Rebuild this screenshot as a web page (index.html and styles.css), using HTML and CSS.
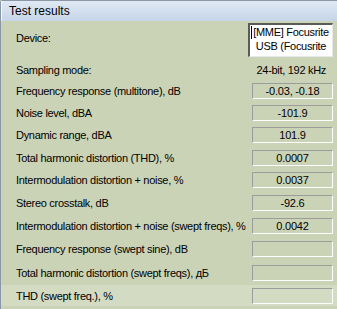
FILE: index.html
```html
<!DOCTYPE html>
<html lang="en">
<head>
    <meta charset="UTF-8">
    <title>Test results</title>
    <link rel="stylesheet" href="styles.css">
</head>
<body>
    <div class="panel">
        <div class="panel-title">Test results</div>
        <div class="panel-body">
            <div class="row row-device">
                <span class="label">Device:</span>
                <div class="device-box"><span class="caret"></span>[MME] Focusrite<br>USB (Focusrite</div>
            </div>
            <div class="row row-plain">
                <span class="label">Sampling mode:</span>
                <span class="plain-value">24-bit, 192 kHz</span>
            </div>
            <div class="results">
                <div class="row"><span class="label">Frequency response (multitone), dB</span><span class="value">-0.03, -0.18</span></div>
                <div class="row"><span class="label">Noise level, dBA</span><span class="value">-101.9</span></div>
                <div class="row"><span class="label">Dynamic range, dBA</span><span class="value">101.9</span></div>
                <div class="row"><span class="label">Total harmonic distortion (THD), %</span><span class="value">0.0007</span></div>
                <div class="row"><span class="label">Intermodulation distortion + noise, %</span><span class="value">0.0037</span></div>
                <div class="row"><span class="label">Stereo crosstalk, dB</span><span class="value">-92.6</span></div>
                <div class="row"><span class="label">Intermodulation distortion + noise (swept freqs), %</span><span class="value">0.0042</span></div>
                <div class="row"><span class="label">Frequency response (swept sine), dB</span><span class="value"></span></div>
                <div class="row"><span class="label">Total harmonic distortion (swept freqs), дБ</span><span class="value"></span></div>
                <div class="row row-hover"><span class="label">THD (swept freq.), %</span><span class="value"></span></div>
            </div>
        </div>
    </div>
</body>
</html>
```

FILE: styles.css
```css
body {
    margin: 0;
    padding: 0;
    background-color: #cbd3b7;
    font-family: "Liberation Sans", Arial, sans-serif;
    font-size: 11px;
    color: #000;
    overflow: hidden;
}

.panel {
    height: 309px;
    border-left: 1px solid #8a97a6;
    border-top: 1px solid #8a97a6;
    border-top-left-radius: 3px;
    background-color: #cbd3b7;
}

.panel-title {
    height: 20px;
    line-height: 20px;
    padding-left: 7px;
    font-size: 12px;
    background: linear-gradient(#e0e9f4, #c6d5e8);
    border-left: 1px solid #f4f7fb;
}

.panel-body {
    padding: 0 4px 0 15px;
}

.row {
    display: flex;
    align-items: center;
    justify-content: space-between;
}

.label {
    white-space: nowrap;
    letter-spacing: -0.3px;
}

.row-device {
    align-items: flex-start;
    height: 37px;
    padding-top: 2px;
}

.row-device .label {
    margin-top: 9px;
}

.device-box {
    width: 82px;
    height: 31px;
    background: #fff;
    border-top: 2px solid #5a5a5a;
    border-left: 2px solid #5a5a5a;
    border-right: 1px solid #e8e8e8;
    border-bottom: 1px solid #e8e8e8;
    line-height: 14px;
    text-align: center;
    letter-spacing: -0.3px;
    position: relative;
    overflow: hidden;
    white-space: nowrap;
}

.caret {
    position: absolute;
    left: 1px;
    top: 1px;
    width: 1px;
    height: 13px;
    background: #000;
}

.row-plain {
    height: 20px;
}

.plain-value {
    margin-right: 7px;
    letter-spacing: -0.3px;
}

.results {
    display: grid;
    grid-template-rows: 21px 23px 22px 23px 22px 23px 23px 24px 24px 21px;
}

.value {
    width: 79px;
    height: 14px;
    line-height: 14px;
    text-align: center;
    letter-spacing: -0.2px;
    border-top: 1px solid #9c9c9c;
    border-left: 1px solid #9c9c9c;
    border-right: 1px solid #fff;
    border-bottom: 1px solid #fff;
}

.row-hover {
    margin-left: -15px;
    margin-right: -4px;
    padding-left: 15px;
    padding-right: 4px;
    background-color: #d4dbc3;
}
```
